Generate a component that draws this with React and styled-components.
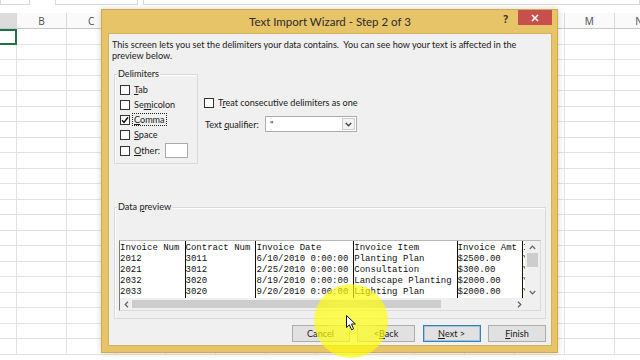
import React from "react";
import styled, { createGlobalStyle, css } from "styled-components";

const GlobalStyle = createGlobalStyle`
  html, body {
    margin: 0;
    padding: 0;
    background: #fff;
  }
  body {
    width: 640px;
    height: 360px;
    overflow: hidden;
    font-family: "Lato", "Noto Sans", sans-serif;
  }
`;

// letters under the dialog are never visible, so they stay blank
const COLUMNS = ["", "B", "C", "", "", "", "", "", "", "", "", "", "M", "N"];
const ROW_COUNT = 21;
const CHAR_W = 5.38;

const PREVIEW = [
  { chars: 12, cells: ["Invoice Num", "2012", "2021", "2032", "2033"] },
  { chars: 13, cells: ["Contract Num", "3011", "3012", "3020", "3020"] },
  {
    chars: 18,
    cells: ["Invoice Date", "6/10/2010 0:00:00", "2/25/2010 0:00:00", "8/19/2010 0:00:00", "9/20/2010 0:00:00"],
  },
  {
    chars: 19,
    cells: ["Invoice Item", "Planting Plan", "Consultation", "Landscape Planting", "Lighting Plan"],
  },
  { chars: 12, cells: ["Invoice Amt", "$2500.00", "$300.00", "$2000.00", "$2000.00"] },
  { chars: 10, cells: ["Invoice Paid", "Y", "Y", "Y", "Y"] },
];

const DELIMITERS = [
  { key: "T", rest: "ab", checked: false },
  { pre: "Se", key: "m", rest: "icolon", checked: false },
  { key: "C", rest: "omma", checked: true, focused: true },
  { key: "S", rest: "pace", checked: false },
];

function App() {
  return (
    <>
      <GlobalStyle />
      <Page>
        <Sheet>
          <FormulaStrip>
            <StripBox $w={30} />
            <StripGap $w={25} />
            <StripBox $w={83} />
            <StripGap $w={5} />
            <StripBox $w={497} />
          </FormulaStrip>
          <Grid>
            {COLUMNS.map((c, i) => (
              <HeaderCell key={"h" + i} $active={i === 0}>
                {c}
              </HeaderCell>
            ))}
            {Array.from({ length: ROW_COUNT }).map((_, r) =>
              COLUMNS.map((_, c) => <Cell key={r + "-" + c} $selected={r === 0 && c === 0} />)
            )}
          </Grid>
        </Sheet>

        <Dialog>
          <TitleBar>
            <span />
            <Title>Text Import Wizard - Step 2 of 3</Title>
            <TitleButtons>
              <HelpMark>?</HelpMark>
              <CloseButton>
                <svg width="8" height="8" viewBox="0 0 8 8">
                  <path d="M1 1 L7 7 M7 1 L1 7" stroke="#fff" strokeWidth="1.6" />
                </svg>
              </CloseButton>
            </TitleButtons>
          </TitleBar>

          <Body>
            <Intro>
              This screen lets you set the delimiters your data contains.&nbsp; You can see how your text is affected in the
              <br />
              preview below.
            </Intro>

            <OptionsRow>
              <DelimGroup>
                <Legend>Delimiters</Legend>
                {DELIMITERS.map((d) => (
                  <CheckRow key={d.key + d.rest}>
                    <Box>
                      {d.checked && (
                        <svg width="8" height="8" viewBox="0 0 8 8">
                          <path d="M1 4.2 L3 6.4 L7 1.2" stroke="#111" strokeWidth="1.5" fill="none" />
                        </svg>
                      )}
                    </Box>
                    <CheckLabel $focused={d.focused}>
                      {d.pre}
                      <u>{d.key}</u>
                      {d.rest}
                    </CheckLabel>
                  </CheckRow>
                ))}
                <CheckRow $tall>
                  <Box />
                  <CheckLabel>
                    <u>O</u>ther:
                  </CheckLabel>
                  <OtherInput />
                </CheckRow>
              </DelimGroup>

              <SideOptions>
                <CheckRow>
                  <Box />
                  <CheckLabel>
                    T<u>r</u>eat consecutive delimiters as one
                  </CheckLabel>
                </CheckRow>
                <QualifierRow>
                  <QualifierLabel>
                    Text <u>q</u>ualifier:
                  </QualifierLabel>
                  <Select>
                    <SelectValue>"</SelectValue>
                    <SelectArrow>
                      <svg width="7" height="5" viewBox="0 0 7 5">
                        <path d="M0.8 1 L3.5 3.8 L6.2 1" stroke="#444" strokeWidth="1.3" fill="none" />
                      </svg>
                    </SelectArrow>
                  </Select>
                </QualifierRow>
              </SideOptions>
            </OptionsRow>

            <PreviewGroup>
              <Legend>
                Data <u>p</u>review
              </Legend>
              <PreviewBox>
                <TableArea>
                  {PREVIEW.map((col, i) => (
                    <PreviewColumn key={i} $w={col.chars * CHAR_W}>
                      {col.cells.map((t, j) => (
                        <PreviewLine key={j}>{t}</PreviewLine>
                      ))}
                    </PreviewColumn>
                  ))}
                </TableArea>
                <VScroll>
                  <ArrowBtn $h={12}>
                    <svg width="7" height="5" viewBox="0 0 7 5">
                      <path d="M0.8 4 L3.5 1.2 L6.2 4" stroke="#606060" strokeWidth="1.2" fill="none" />
                    </svg>
                  </ArrowBtn>
                  <VThumb />
                  <Spacer />
                  <ArrowBtn $h={12}>
                    <svg width="7" height="5" viewBox="0 0 7 5">
                      <path d="M0.8 1 L3.5 3.8 L6.2 1" stroke="#606060" strokeWidth="1.2" fill="none" />
                    </svg>
                  </ArrowBtn>
                </VScroll>
                <HScroll>
                  <ArrowBtn $w={12}>
                    <svg width="5" height="7" viewBox="0 0 5 7">
                      <path d="M4 0.8 L1.2 3.5 L4 6.2" stroke="#606060" strokeWidth="1.2" fill="none" />
                    </svg>
                  </ArrowBtn>
                  <HThumb />
                  <Spacer />
                  <ArrowBtn $w={12}>
                    <svg width="5" height="7" viewBox="0 0 5 7">
                      <path d="M1 0.8 L3.8 3.5 L1 6.2" stroke="#606060" strokeWidth="1.2" fill="none" />
                    </svg>
                  </ArrowBtn>
                </HScroll>
                <ScrollCorner />
              </PreviewBox>
            </PreviewGroup>

            <ButtonRow>
              <Button>Cancel</Button>
              <Button>
                &lt; <u>B</u>ack
              </Button>
              <Button $default>
                <u>N</u>ext &gt;
              </Button>
              <Button>
                <u>F</u>inish
              </Button>
            </ButtonRow>
          </Body>
        </Dialog>

        <Spotlight />
        <Cursor width="12" height="17" viewBox="0 0 12 17">
          <path
            d="M0.5 0.5 L0.5 12.5 L3.4 9.8 L5.6 14.8 L7.6 13.9 L5.5 9 L9.4 9 Z"
            fill="#fff"
            stroke="#111"
            strokeWidth="1"
            strokeLinejoin="round"
          />
        </Cursor>
      </Page>
    </>
  );
}

export default App;

const Page = styled.div`
  position: relative;
  width: 640px;
  height: 360px;
  overflow: hidden;
  background: #fff;
`;

const Sheet = styled.div`
  display: flex;
  flex-direction: column;
`;

const FormulaStrip = styled.div`
  display: flex;
  height: 13px;
`;

const StripBox = styled.div`
  width: ${(p) => p.$w}px;
  height: 5px;
  box-sizing: border-box;
  border: 1px solid #d9d9d9;
  border-top: none;
`;

const StripGap = styled.div`
  width: ${(p) => p.$w}px;
`;

const Grid = styled.div`
  display: grid;
  grid-template-columns: 17px repeat(13, 49.8px);
  grid-template-rows: 16px;
  grid-auto-rows: 15.5px;
`;

const HeaderCell = styled.div`
  box-sizing: border-box;
  display: flex;
  align-items: center;
  justify-content: center;
  border-right: 1px solid #d8d8d8;
  border-bottom: 1px solid #c8c8c8;
  background: ${(p) => (p.$active ? "#dcdcdc" : "#fafafa")};
  color: #555;
  font-family: "Noto Sans", sans-serif;
  font-size: 10px;
`;

const Cell = styled.div`
  box-sizing: border-box;
  border-right: 1px solid #e2e2e2;
  border-bottom: 1px solid #e2e2e2;
  ${(p) =>
    p.$selected &&
    css`
      border: 2px solid #217346;
      border-left: none;
    `}
`;

const Dialog = styled.div`
  position: absolute;
  left: 101px;
  top: 9px;
  width: 457px;
  height: 344px;
  box-sizing: border-box;
  display: flex;
  flex-direction: column;
  padding: 0 5px 6px 6px;
  background: #e8c468;
  border: 1px solid #d2ab4c;
  box-shadow: 0 0 6px rgba(0, 0, 0, 0.18);
`;

const TitleBar = styled.div`
  height: 22px;
  display: grid;
  grid-template-columns: 1fr auto 1fr;
  align-items: start;
`;

const Title = styled.div`
  align-self: center;
  font-size: 11.5px;
  color: #2b2b2b;
`;

const TitleButtons = styled.div`
  display: flex;
  justify-content: flex-end;
  align-items: flex-start;
`;

const HelpMark = styled.div`
  margin-top: 2px;
  margin-right: 10px;
  font-family: "Noto Sans", sans-serif;
  font-weight: bold;
  font-size: 10px;
  color: #333;
`;

const CloseButton = styled.div`
  width: 34px;
  height: 15px;
  display: flex;
  align-items: center;
  justify-content: center;
  background: #c7504d;
`;

const Body = styled.div`
  flex: 1;
  display: flex;
  flex-direction: column;
  background: #f0f0f0;
  border: 1px solid #cfb15e;
  font-size: 9.1px;
  color: #1a1a1a;
  margin-top: 1px;
`;

const Intro = styled.div`
  padding: 5px 3px 0;
  line-height: 11px;
  white-space: nowrap;
`;

const OptionsRow = styled.div`
  display: flex;
  margin: 13px 0 0 5px;
`;

const groupBox = css`
  position: relative;
  box-sizing: border-box;
  border: 1px solid #d9d9d9;
  box-shadow: inset 1px 1px 0 #fff;
`;

const DelimGroup = styled.div`
  ${groupBox};
  width: 84px;
  height: 90px;
  padding: 7px 0 0 5px;
`;

const Legend = styled.span`
  position: absolute;
  top: -7px;
  left: 2px;
  padding: 0 1px;
  background: #f0f0f0;
  line-height: 12px;
`;

const CheckRow = styled.div`
  display: flex;
  align-items: center;
  height: ${(p) => (p.$tall ? 17 : 15)}px;
`;

const Box = styled.div`
  width: 10px;
  height: 10px;
  box-sizing: border-box;
  border: 1px solid #333;
  background: #fff;
  display: flex;
  align-items: center;
  justify-content: center;
  flex-shrink: 0;
`;

const CheckLabel = styled.span`
  margin-left: 2px;
  padding: 0 1px;
  line-height: 11px;
  white-space: nowrap;
  border: 1px dotted ${(p) => (p.$focused ? "#222" : "transparent")};
`;

const OtherInput = styled.div`
  margin-left: 3px;
  width: 23px;
  height: 15px;
  box-sizing: border-box;
  background: #fff;
  border: 1px solid #ababab;
`;

const SideOptions = styled.div`
  display: flex;
  flex-direction: column;
  padding: 21px 0 0 6px;
`;

const QualifierRow = styled.div`
  display: flex;
  align-items: center;
  margin-top: 6px;
  margin-left: 1px;
`;

const QualifierLabel = styled.span`
  width: 60px;
  white-space: nowrap;
`;

const Select = styled.div`
  width: 92px;
  height: 16px;
  box-sizing: border-box;
  display: flex;
  align-items: center;
  background: #fff;
  border: 1px solid #abadb3;
`;

const SelectValue = styled.span`
  flex: 1;
  padding-left: 4px;
`;

const SelectArrow = styled.div`
  width: 13px;
  height: 12px;
  margin-right: 1px;
  box-sizing: border-box;
  display: flex;
  align-items: center;
  justify-content: center;
  background: #f3f3f3;
  border: 1px solid #cfcfcf;
`;

const PreviewGroup = styled.div`
  ${groupBox};
  margin: 43px 5px 0 5px;
  height: 112px;
  padding: 32px 0 0 4px;
`;

const PreviewBox = styled.div`
  width: 422px;
  height: 71px;
  box-sizing: border-box;
  display: grid;
  grid-template-columns: 1fr 15px;
  grid-template-rows: 1fr 12px;
  background: #fff;
  border: 1px solid #7a7a7a;
  border-top-color: #b9b9b9;
  border-right-color: #dadada;
  border-bottom-color: #dadada;
`;

const TableArea = styled.div`
  display: flex;
  overflow: hidden;
  padding-top: 2px;
`;

const PreviewColumn = styled.div`
  flex: 0 0 auto;
  width: ${(p) => p.$w}px;
  border-right: 1px solid #111;
  margin-top: -2px;
  padding-top: 2px;
  overflow: hidden;
  font-family: "Liberation Mono", monospace;
  font-size: 9px;
  color: #111;
`;

const PreviewLine = styled.div`
  height: 11px;
  line-height: 11px;
  white-space: pre;
`;

const VScroll = styled.div`
  display: flex;
  flex-direction: column;
  background: #f0f0f0;
`;

const HScroll = styled.div`
  display: flex;
  align-items: center;
  background: #f0f0f0;
`;

const ScrollCorner = styled.div`
  background: #f0f0f0;
`;

const ArrowBtn = styled.div`
  display: flex;
  align-items: center;
  justify-content: center;
  flex-shrink: 0;
  ${(p) => p.$h && `height: ${p.$h}px;`}
  ${(p) => p.$w && `width: ${p.$w}px; height: 100%;`}
`;

const VThumb = styled.div`
  height: 14px;
  margin: 0 2px;
  background: #cdcdcd;
`;

const HThumb = styled.div`
  width: 309px;
  height: 8px;
  background: #cdcdcd;
`;

const Spacer = styled.div`
  flex: 1;
`;

const ButtonRow = styled.div`
  display: flex;
  justify-content: flex-end;
  gap: 7.5px;
  margin-top: 6px;
  padding-right: 5px;
`;

const Button = styled.div`
  width: 58px;
  height: 17px;
  box-sizing: border-box;
  display: flex;
  align-items: center;
  justify-content: center;
  background: #e1e1e1;
  border: 1px solid ${(p) => (p.$default ? "#3c7fb1" : "#adadad")};
  ${(p) => p.$default && "box-shadow: inset 0 0 0 1px #9cc4e4;"}
  white-space: nowrap;
`;

const Spotlight = styled.div`
  position: absolute;
  left: 314px;
  top: 284px;
  width: 74px;
  height: 74px;
  border-radius: 50%;
  background: radial-gradient(
    circle,
    rgba(255, 255, 40, 0.78) 0%,
    rgba(255, 255, 0, 0.66) 68%,
    rgba(255, 255, 0, 0) 100%
  );
  pointer-events: none;
`;

const Cursor = styled.svg`
  position: absolute;
  left: 346px;
  top: 315px;
`;
